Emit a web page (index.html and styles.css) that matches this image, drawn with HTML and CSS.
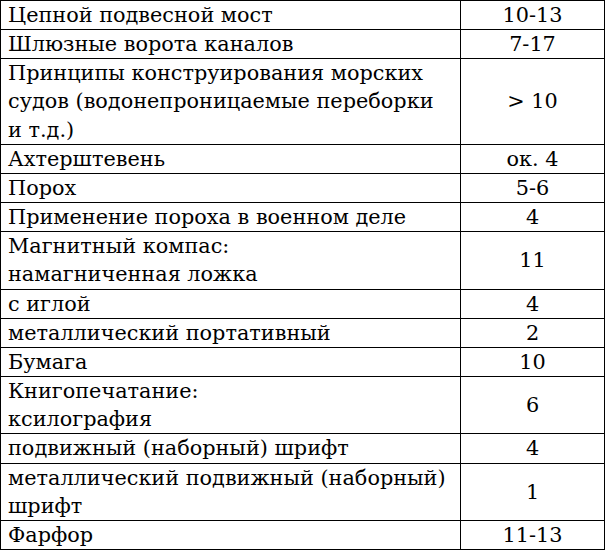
FILE: index.html
```html
<!DOCTYPE html>
<html lang="ru">
<head>
<meta charset="utf-8">
<link rel="stylesheet" href="styles.css">
</head>
<body>
<table class="inv">
  <tr><td class="name">Цепной подвесной мост</td><td class="date">10-13</td></tr>
  <tr><td class="name">Шлюзные ворота каналов</td><td class="date">7-17</td></tr>
  <tr><td class="name">Принципы конструирования морских<br>судов (водонепроницаемые переборки<br>и т.д.)</td><td class="date">&gt; 10</td></tr>
  <tr><td class="name">Ахтерштевень</td><td class="date">ок. 4</td></tr>
  <tr><td class="name">Порох</td><td class="date">5-6</td></tr>
  <tr><td class="name">Применение пороха в военном деле</td><td class="date">4</td></tr>
  <tr><td class="name">Магнитный компас:<br>намагниченная ложка</td><td class="date">11</td></tr>
  <tr><td class="name">с иглой</td><td class="date">4</td></tr>
  <tr><td class="name">металлический портативный</td><td class="date">2</td></tr>
  <tr><td class="name">Бумага</td><td class="date">10</td></tr>
  <tr><td class="name">Книгопечатание:<br>ксилография</td><td class="date">6</td></tr>
  <tr><td class="name">подвижный (наборный) шрифт</td><td class="date">4</td></tr>
  <tr><td class="name">металлический подвижный (наборный)<br>шрифт</td><td class="date">1</td></tr>
  <tr><td class="name">Фарфор</td><td class="date">11-13</td></tr>
</table>
</body>
</html>
```
FILE: styles.css
```css
html, body {
  margin: 0;
  padding: 0;
  background: #fff;
}
.inv {
  border-collapse: collapse;
  width: 605px;
  font-family: "DejaVu Serif", "Liberation Serif", serif;
  font-size: 20.8px;
  color: #000;
}
.inv td {
  border: 1px solid #000;
  line-height: 28.15px;
  padding: 0 7px;
  vertical-align: middle;
  white-space: nowrap;
}
.inv .name {
  width: 445px;
  text-align: left;
}
.inv .date {
  text-align: center;
}
```
